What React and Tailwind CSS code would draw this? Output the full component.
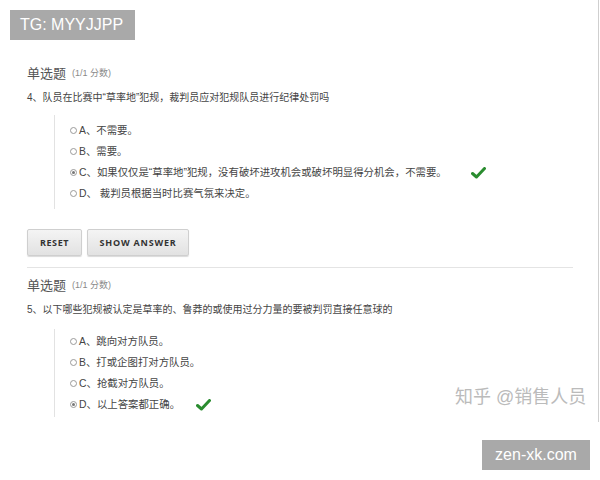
import React from "react";

const cjk = "font-['Liberation_Sans','Noto_Sans_CJK_SC',sans-serif]";

function Radio({ checked }) {
  return (
    <span className="mr-[2px] inline-flex h-[7px] w-[7px] shrink-0 items-center justify-center rounded-full border border-[#9a9a9a] bg-white">
      {checked && <span className="h-[3px] w-[3px] rounded-full bg-[#777]" />}
    </span>
  );
}

function Check() {
  return (
    <svg width="15" height="12" viewBox="0 0 15 12" className="shrink-0">
      <path
        d="M1.5 6.5 L5.5 10 L13.5 1.5"
        fill="none"
        stroke="#2a8c2f"
        strokeWidth="3"
        strokeLinecap="round"
        strokeLinejoin="round"
      />
    </svg>
  );
}

function Option({ label, checked, correct, gap }) {
  return (
    <div className="flex h-[21px] items-center">
      <Radio checked={checked} />
      <span className="text-[10.4px] text-[#444]">{label}</span>
      {correct && <span className={gap}><Check /></span>}
    </div>
  );
}

function Question({ number, text }) {
  return (
    <div>
      <div className="flex h-[18px] items-center gap-[6px]">
        <span className="text-[13px] text-[#555]">单选题</span>
        <span className="text-[9px] text-[#8a8a8a]">(1/1 分数)</span>
      </div>
      <div className="mt-[6px] flex h-[16px] items-center text-[10px] text-[#444]">
        {number}、{text}
      </div>
    </div>
  );
}

export default function App() {
  return (
    <div className={`relative h-[480px] w-[600px] overflow-hidden bg-white ${cjk}`}>
      <div className="px-[27px] pt-[65px]">
        <Question
          number="4"
          text="队员在比赛中“草率地”犯规，裁判员应对犯规队员进行纪律处罚吗"
        />
        <div className="ml-[27px] mt-[10px] border-l border-[#e2e2e2] pl-[15px] py-[5px]">
          <Option label="A、不需要。" />
          <Option label="B、需要。" />
          <Option
            label="C、如果仅仅是“草率地”犯规，没有破坏进攻机会或破坏明显得分机会，不需要。"
            checked
            correct
            gap="ml-[24px]"
          />
          <Option label="D、 裁判员根据当时比赛气氛来决定。" />
        </div>

        <div className="mt-[20px] flex gap-[5px] font-['Open_Sans',sans-serif]">
          <button className="h-[27px] w-[55px] rounded-[2px] border border-[#cfcfcf] bg-gradient-to-b from-[#f4f4f4] to-[#e2e2e2] text-[9px] font-bold tracking-[0.6px] text-[#333] shadow-[0_1px_1px_rgba(0,0,0,0.15)]">
            RESET
          </button>
          <button className="h-[27px] w-[102px] rounded-[2px] border border-[#cfcfcf] bg-gradient-to-b from-[#f4f4f4] to-[#e2e2e2] text-[9px] font-bold tracking-[0.8px] text-[#333] shadow-[0_1px_1px_rgba(0,0,0,0.15)]">
            SHOW ANSWER
          </button>
        </div>

        <div className="mt-[11px] mb-[9px] h-px w-[546px] bg-[#e4e4e4]" />

        <Question
          number="5"
          text="以下哪些犯规被认定是草率的、鲁莽的或使用过分力量的要被判罚直接任意球的"
        />
        <div className="ml-[27px] mt-[12px] border-l border-[#e2e2e2] pl-[15px] py-[2px]">
          <Option label="A、跳向对方队员。" />
          <Option label="B、打或企图打对方队员。" />
          <Option label="C、抢截对方队员。" />
          <Option label="D、以上答案都正确。" checked correct gap="ml-[16px]" />
        </div>
      </div>

      {/* watermarks */}
      <div className="absolute left-[10px] top-[10px] flex h-[30px] w-[125px] items-center pl-[10px] font-['Liberation_Sans',sans-serif] text-[16px] text-white bg-[#a9a9a9]">
        TG: MYYJJPP
      </div>
      <div className="absolute left-[455px] top-[384px] text-[18px] text-[#bbb] [text-shadow:0_0_2px_#fff]">
        知乎 @销售人员
      </div>
      <div className="absolute left-[598px] top-[0px] h-[422px] w-px bg-[#cfcfcf]" />
      <div className="absolute left-[482px] top-[440px] flex h-[30px] w-[108px] items-center justify-center font-['Liberation_Sans',sans-serif] text-[16px] text-white bg-[#a9a9a9]">
        zen-xk.com
      </div>
    </div>
  );
}
